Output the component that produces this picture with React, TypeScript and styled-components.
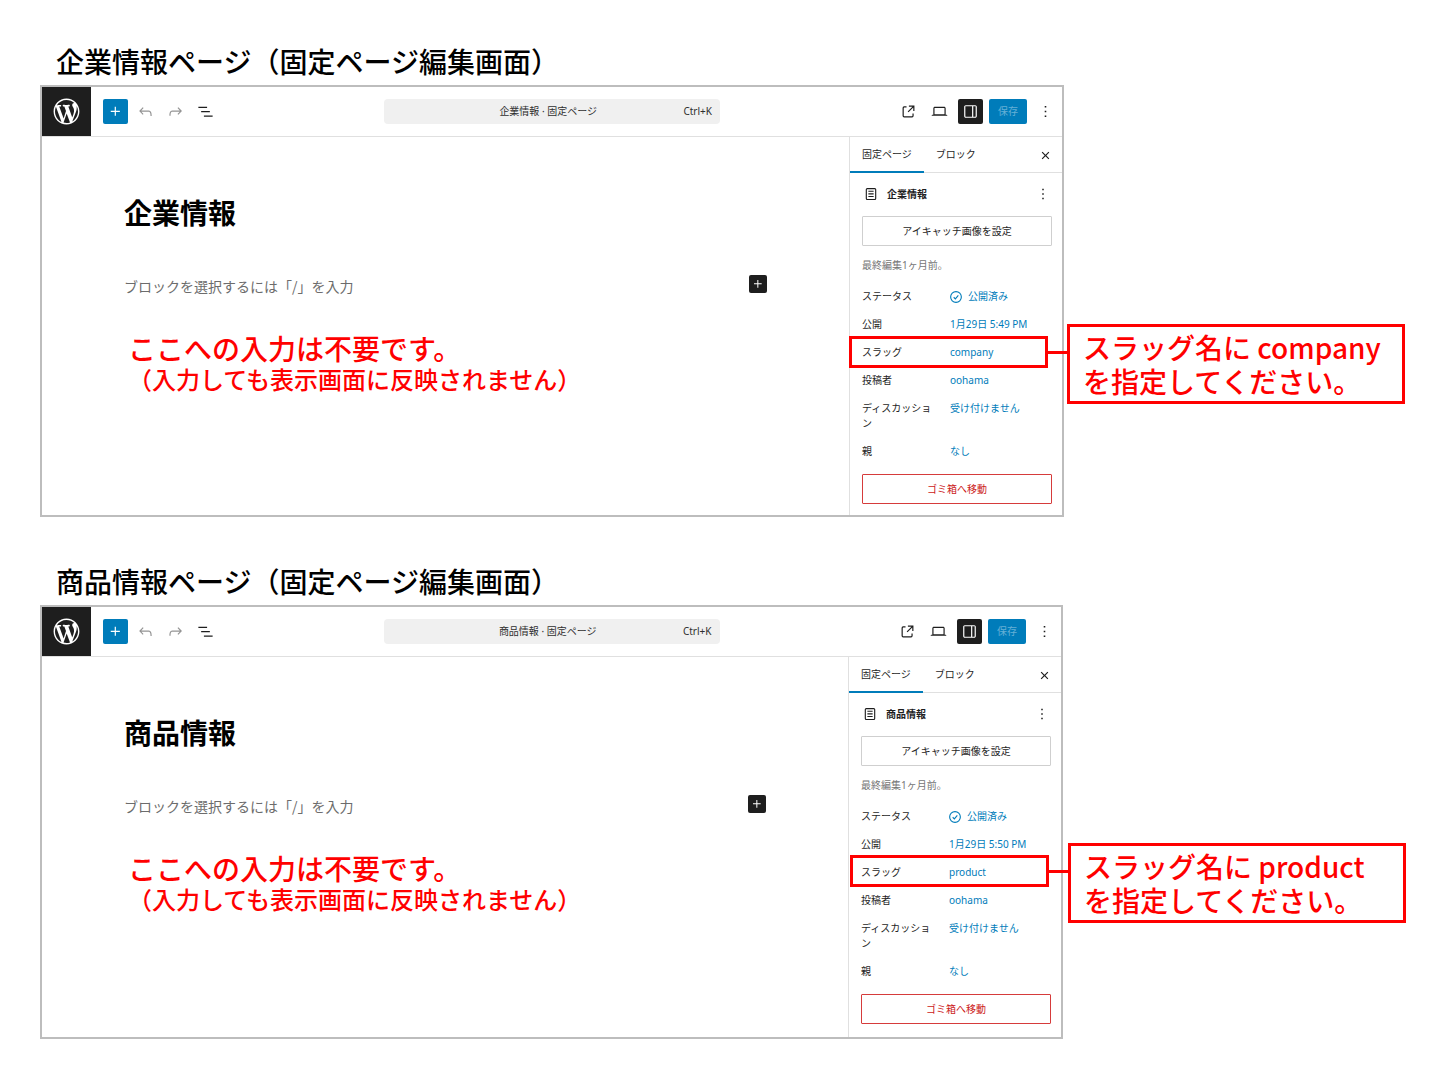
import React from "react";
import styled, { createGlobalStyle } from "styled-components";

const jp = '"Noto Sans CJK JP", sans-serif';
const ui = '"Noto Sans", "Noto Sans CJK JP", sans-serif';
const blue = "#007cba";
const ink = "#1e1e1e";
const red = "#ff0000";

const GlobalStyle = createGlobalStyle`
  *, *::before, *::after { box-sizing: border-box; }
  body { margin: 0; background: #fff; color: #000; font-family: ${jp}; }
  button, input { font: inherit; color: inherit; margin: 0; padding: 0; border: 0; background: none; }
  h1, h2, p, dl, dd, dt { margin: 0; }
`;

const Page = styled.main`
  display: flex;
  flex-direction: column;
  gap: 44px;
  padding: 41px 34px 40px 40px;
`;

const Guide = styled.section<{ $aside: number }>`
  display: grid;
  grid-template-columns: minmax(0, 1fr) ${(p) => p.$aside}px;
  row-gap: 4px;
`;

const GuideTitle = styled.h1`
  grid-column: 1 / -1;
  padding-left: 16px;
  font-size: 28px;
  line-height: 40px;
  font-weight: 500;
`;

const Panel = styled.div`
  border: 2px solid #bdbdbd;
  background: #fff;
  font-family: ${ui};
  font-size: 10px;
  line-height: 15px;
  color: ${ink};
`;

const Toolbar = styled.header`
  display: grid;
  grid-template-columns: minmax(0, 1fr) minmax(0, 336px) minmax(0, 1fr);
  align-items: center;
  border-bottom: 1px solid #e0e0e0;
`;

const ToolGroup = styled.div<{ $end?: boolean }>`
  display: flex;
  align-items: center;
  gap: ${(p) => (p.$end ? 6 : 5)}px;
  ${(p) => p.$end && "justify-content: flex-end; padding-right: 4px;"}
`;

const LogoLink = styled.a`
  display: grid;
  place-items: center;
  width: 49px;
  height: 49px;
  margin-right: 7px;
  background: ${ink};
  color: #fff;
`;

const ToolButton = styled.button<{ $fill?: string; $dim?: boolean }>`
  display: grid;
  place-items: center;
  flex: none;
  width: 25px;
  height: 25px;
  border-radius: 2px;
  background: ${(p) => p.$fill ?? "transparent"};
  color: ${(p) => (p.$fill ? "#fff" : p.$dim ? "#949494" : ink)};
`;

const SaveButton = styled.button`
  width: 38px;
  height: 25px;
  border-radius: 2px;
  background: ${blue};
  color: #66b0d6;
`;

const CommandButton = styled.button`
  display: flex;
  align-items: center;
  height: 25px;
  padding: 0 8px 0 29px;
  border-radius: 4px;
  background: #f0f0f0;
  color: #2f2f2f;
`;

const CommandTitle = styled.span`
  flex: 1;
  text-align: center;
`;

const Body = styled.div<{ $height: number }>`
  display: grid;
  grid-template-columns: minmax(0, 1fr) 213px;
  min-height: ${(p) => p.$height}px;
`;

const Canvas = styled.div`
  padding: 55px 82px 0;
  font-family: ${jp};
`;

const PageTitle = styled.h2`
  font-size: 28px;
  line-height: 40px;
  font-weight: 700;
  color: #000;
`;

const Prompt = styled.div`
  display: flex;
  align-items: flex-start;
  margin-top: 43px;
`;

const PromptInput = styled.input`
  flex: 1;
  min-width: 0;
  height: 22px;
  font-size: 14px;
  outline: none;
  &::placeholder {
    color: #6c6c6c;
    opacity: 1;
  }
`;

const AppendButton = styled.button`
  display: grid;
  place-items: center;
  width: 18px;
  height: 18px;
  border-radius: 2px;
  background: ${ink};
  color: #fff;
`;

const Note = styled.p`
  margin-top: 35px;
  padding-left: 4px;
  font-weight: 500;
  font-size: 28px;
  line-height: 32px;
  color: ${red};
`;

const NoteDetail = styled.span`
  display: block;
  font-size: 24px;
  line-height: 30px;
`;

const Sidebar = styled.aside`
  border-left: 1px solid #e0e0e0;
`;

const Tabs = styled.div`
  display: flex;
  align-items: center;
  height: 36px;
  padding-right: 4px;
  box-shadow: inset 0 -1px #e0e0e0;
`;

const Tab = styled.button<{ $active?: boolean }>`
  height: 36px;
  padding: 0 12px 2px;
  box-shadow: ${(p) => (p.$active ? `inset 0 -2px ${blue}` : "none")};
`;

const Spacer = styled.span`
  flex: 1;
`;

const Settings = styled.div`
  padding: 0 10px 11px 12px;
`;

const Summary = styled.div`
  display: flex;
  align-items: center;
  gap: 7px;
  height: 43px;
  padding-bottom: 1px;
`;

const SummaryTitle = styled.strong`
  flex: 1;
  font-weight: 700;
`;

const MenuButton = styled.button`
  display: grid;
  place-items: center;
  width: 18px;
  height: 18px;
`;

const WideButton = styled.button<{ $danger?: boolean }>`
  display: block;
  width: 100%;
  height: 30px;
  border: 1px solid ${(p) => (p.$danger ? "#d63b3b" : "#cfcfcf")};
  border-radius: 1px;
  color: ${(p) => (p.$danger ? "#cc1818" : ink)};
`;

const Edited = styled.p`
  line-height: 36px;
  padding-top: 1px;
  color: #757575;
`;

const Rows = styled.dl`
  padding-bottom: 8px;
`;

const Row = styled.div`
  position: relative;
  display: grid;
  grid-template-columns: 76px minmax(0, 1fr);
  column-gap: 12px;
  padding: 6px 0 7px;
`;

const Value = styled.button`
  display: flex;
  align-items: center;
  gap: 6px;
  height: 15px;
  color: ${blue};
  white-space: nowrap;
`;

/* Red frame over the slug row, with the line that leads to its callout. */
const Highlight = styled.span<{ $left: number; $top: number }>`
  position: absolute;
  top: ${(p) => p.$top}px;
  left: ${(p) => p.$left}px;
  width: 199px;
  height: 32px;
  border: 3px solid ${red};
  pointer-events: none;
  &::after {
    content: "";
    position: absolute;
    top: 12px;
    left: 100%;
    width: 22px;
    height: 3px;
    background: ${red};
  }
`;

const CalloutColumn = styled.div<{ $gutter: number; $top: number }>`
  padding: ${(p) => p.$top}px 0 0 ${(p) => p.$gutter}px;
`;

const Callout = styled.p`
  width: 338px;
  padding: 3px 13px;
  border: 3px solid ${red};
  font-size: 28px;
  line-height: 34px;
  font-weight: 500;
  color: ${red};
`;

const paths = {
  plus: "M11 12.5V17.5H12.5V12.5H17.5V11H12.5V6H11V11H6V12.5H11Z",
  undo: "M18.3 11.7c-.6-.6-1.4-.9-2.3-.9H6.7l2.9-3.3-1.1-1-4.5 5L8.5 16l1-1-2.7-2.7H16c.5 0 .9.2 1.3.5 1 1 1 3.4 1 4.5v.3h1.5v-.2c0-1.5 0-4.3-1.5-5.7z",
  redo: "M15.6 6.5l-1.1 1 2.9 3.3H8c-.9 0-1.7.3-2.3.9-1.4 1.5-1.4 4.2-1.4 5.6v.2h1.5v-.3c0-1.1 0-3.5 1-4.5.3-.3.7-.5 1.3-.5h9.2L14.5 15l1.1 1.1 4.6-4.6-4.6-5z",
  list: "M3 6h11v1.5H3V6Zm3.5 5.5h11V13h-11v-1.5ZM21 17H10v1.5h11V17Z",
  external:
    "M19.5 4.5h-7V6h4.44l-5.97 5.97 1.06 1.06L18 7.06v4.44h1.5v-7Zm-13 1a2 2 0 0 0-2 2v10a2 2 0 0 0 2 2h10a2 2 0 0 0 2-2v-3H17v3a.5.5 0 0 1-.5.5h-10a.5.5 0 0 1-.5-.5v-10a.5.5 0 0 1 .5-.5h3V5.5h-3Z",
  desktop:
    "M20.5 16h-.7V8c0-1.1-.9-2-2-2H6.2c-1.1 0-2 .9-2 2v8h-.7c-.8 0-1.5.7-1.5 1.5h20c0-.8-.7-1.5-1.5-1.5zM5.7 8c0-.3.2-.5.5-.5h11.6c.3 0 .5.2.5.5v7.6H5.7V8z",
  drawer:
    "M18 4H6c-1.1 0-2 .9-2 2v12c0 1.1.9 2 2 2h12c1.1 0 2-.9 2-2V6c0-1.1-.9-2-2-2zm-4 14.5H6c-.3 0-.5-.2-.5-.5V6c0-.3.2-.5.5-.5h8v13zm4.5-.5c0 .3-.2.5-.5.5h-2.5v-13H18c.3 0 .5.2.5.5v12z",
  more: "M13 19h-2v-2h2v2zm0-6h-2v-2h2v2zm0-6h-2V5h2v2z",
  close:
    "M12 13.06l3.712 3.713 1.061-1.06L13.061 12l3.712-3.712-1.06-1.06L12 10.938 8.288 7.227l-1.061 1.06L10.939 12l-3.712 3.712 1.06 1.061L12 13.061z",
  page: "M15.5 7.5h-7V9h7V7.5Zm-7 3.5h7v1.5h-7V11Zm7 3.5h-7V16h7v-1.5ZM17 4H7a2 2 0 0 0-2 2v12a2 2 0 0 0 2 2h10a2 2 0 0 0 2-2V6a2 2 0 0 0-2-2ZM7 5.5h10a.5.5 0 0 1 .5.5v12a.5.5 0 0 1-.5.5H7a.5.5 0 0 1-.5-.5V6a.5.5 0 0 1 .5-.5Z",
};

function Icon({ name, size = 19 }: { name: keyof typeof paths; size?: number }) {
  return (
    <svg width={size} height={size} viewBox="0 0 24 24" fill="currentColor" fillRule="evenodd" aria-hidden="true">
      <path d={paths[name]} />
    </svg>
  );
}

function WordPressMark() {
  return (
    <svg width="31" height="31" viewBox="-2 -2 24 24" fill="currentColor" aria-hidden="true">
      <path d="M20 10c0-5.51-4.49-10-10-10C4.48 0 0 4.49 0 10c0 5.52 4.48 10 10 10 5.51 0 10-4.48 10-10zM7.78 15.37L4.37 6.22c.55-.02 1.17-.08 1.17-.08.5-.06.44-1.13-.06-1.11 0 0-1.45.11-2.37.11-.18 0-.37 0-.58-.01C4.12 2.69 6.87 1.11 10 1.11c2.33 0 4.45.87 6.05 2.34-.68-.11-1.65.39-1.65 1.58 0 .74.45 1.36.9 2.1.35.61.55 1.36.55 2.46 0 1.49-1.4 5-1.4 5l-3.03-8.37c.54-.02.82-.17.82-.17.5-.05.44-1.25-.06-1.22 0 0-1.44.12-2.38.12-.87 0-2.33-.12-2.33-.12-.5-.03-.56 1.2-.06 1.22l.92.08 1.26 3.41zM17.41 10c.24-.64.74-1.87.43-4.25.7 1.29 1.05 2.71 1.05 4.25 0 3.29-1.73 6.24-4.4 7.78.97-2.59 1.94-5.2 2.92-7.78zM6.1 18.09C3.12 16.65 1.11 13.53 1.11 10c0-1.3.23-2.48.72-3.59C3.25 10.3 4.67 14.2 6.1 18.09zm4.03-6.63l2.58 6.98c-.86.29-1.76.45-2.71.45-.79 0-1.57-.11-2.29-.33.81-2.38 1.62-4.74 2.42-7.1z" />
    </svg>
  );
}

function PublishedIcon() {
  return (
    <svg width="12" height="12" viewBox="0 0 13 13" fill="none" stroke="currentColor" strokeWidth="1.2" aria-hidden="true">
      <circle cx="6.5" cy="6.5" r="5.8" />
      <path d="M4 6.8l1.8 1.7 3.2-3.7" />
    </svg>
  );
}

interface Screen {
  name: string;
  slug: string;
  time: string;
  aside: number;
  gutter: number;
  calloutTop: number;
  frame: { left: number; top: number };
  bodyHeight: number;
}

const screens: Screen[] = [
  {
    name: "企業情報",
    slug: "company",
    time: "1月29日 5:49 PM",
    aside: 342,
    gutter: 3,
    calloutTop: 239,
    frame: { left: -13, top: -3 },
    bodyHeight: 378,
  },
  {
    name: "商品情報",
    slug: "product",
    time: "1月29日 5:50 PM",
    aside: 343,
    gutter: 5,
    calloutTop: 238,
    frame: { left: -11, top: -4 },
    bodyHeight: 380,
  },
];

function EditorToolbar({ name }: { name: string }) {
  return (
    <Toolbar>
      <ToolGroup>
        <LogoLink href="#" aria-label="WordPress">
          <WordPressMark />
        </LogoLink>
        <ToolButton $fill={blue} aria-label="ブロックを追加">
          <Icon name="plus" />
        </ToolButton>
        <ToolButton $dim aria-label="元に戻す">
          <Icon name="undo" />
        </ToolButton>
        <ToolButton $dim aria-label="やり直す">
          <Icon name="redo" />
        </ToolButton>
        <ToolButton aria-label="リスト表示">
          <Icon name="list" />
        </ToolButton>
      </ToolGroup>
      <CommandButton>
        <CommandTitle>{name} · 固定ページ</CommandTitle>
        <span>Ctrl+K</span>
      </CommandButton>
      <ToolGroup $end>
        <ToolButton aria-label="固定ページを表示">
          <Icon name="external" />
        </ToolButton>
        <ToolButton aria-label="プレビュー">
          <Icon name="desktop" />
        </ToolButton>
        <ToolButton $fill={ink} aria-label="設定">
          <Icon name="drawer" />
        </ToolButton>
        <SaveButton>保存</SaveButton>
        <ToolButton aria-label="オプション">
          <Icon name="more" />
        </ToolButton>
      </ToolGroup>
    </Toolbar>
  );
}

function PropertyRow({
  label,
  children,
  frame,
}: {
  label: string;
  children: React.ReactNode;
  frame?: Screen["frame"];
}) {
  return (
    <Row>
      <dt>{label}</dt>
      <dd>
        <Value>{children}</Value>
      </dd>
      {frame && <Highlight $left={frame.left} $top={frame.top} />}
    </Row>
  );
}

function EditorSidebar({ screen }: { screen: Screen }) {
  return (
    <Sidebar>
      <Tabs role="tablist">
        <Tab role="tab" aria-selected="true" $active>
          固定ページ
        </Tab>
        <Tab role="tab" aria-selected="false">
          ブロック
        </Tab>
        <Spacer />
        <ToolButton aria-label="設定を閉じる">
          <Icon name="close" />
        </ToolButton>
      </Tabs>
      <Settings>
        <Summary>
          <Icon name="page" size={18} />
          <SummaryTitle>{screen.name}</SummaryTitle>
          <MenuButton aria-label="操作">
            <Icon name="more" size={18} />
          </MenuButton>
        </Summary>
        <WideButton>アイキャッチ画像を設定</WideButton>
        <Edited>最終編集1ヶ月前。</Edited>
        <Rows>
          <PropertyRow label="ステータス">
            <PublishedIcon />
            公開済み
          </PropertyRow>
          <PropertyRow label="公開">{screen.time}</PropertyRow>
          <PropertyRow label="スラッグ" frame={screen.frame}>
            {screen.slug}
          </PropertyRow>
          <PropertyRow label="投稿者">oohama</PropertyRow>
          <PropertyRow label="ディスカッション">受け付けません</PropertyRow>
          <PropertyRow label="親">なし</PropertyRow>
        </Rows>
        <WideButton $danger>ゴミ箱へ移動</WideButton>
      </Settings>
    </Sidebar>
  );
}

export default function App() {
  return (
    <>
      <GlobalStyle />
      <Page>
        {screens.map((screen) => (
          <Guide key={screen.slug} $aside={screen.aside}>
            <GuideTitle>{screen.name}ページ（固定ページ編集画面）</GuideTitle>
            <Panel>
              <EditorToolbar name={screen.name} />
              <Body $height={screen.bodyHeight}>
                <Canvas>
                  <PageTitle>{screen.name}</PageTitle>
                  <Prompt>
                    <PromptInput aria-label="ブロック" placeholder="ブロックを選択するには「/」を入力" />
                    <AppendButton aria-label="ブロックを追加">
                      <Icon name="plus" size={16} />
                    </AppendButton>
                  </Prompt>
                  <Note>
                    ここへの入力は不要です。
                    <NoteDetail>（入力しても表示画面に反映されません）</NoteDetail>
                  </Note>
                </Canvas>
                <EditorSidebar screen={screen} />
              </Body>
            </Panel>
            <CalloutColumn $gutter={screen.gutter} $top={screen.calloutTop}>
              <Callout>
                スラッグ名に {screen.slug}
                <br />
                を指定してください。
              </Callout>
            </CalloutColumn>
          </Guide>
        ))}
      </Page>
    </>
  );
}
